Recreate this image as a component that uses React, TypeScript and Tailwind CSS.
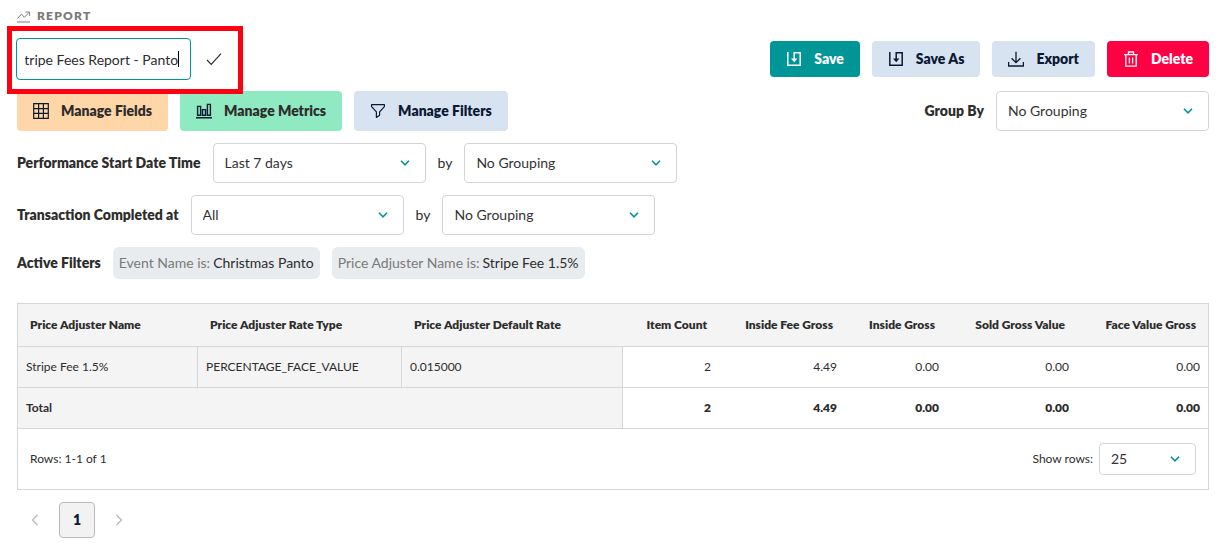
import { ReactNode, useEffect, useRef, useState } from "react";

type IconProps = { children: ReactNode; className?: string };

const Icon = ({ children, className = "h-4 w-4" }: IconProps) => (
  <svg
    viewBox="0 0 16 16"
    fill="none"
    stroke="currentColor"
    strokeWidth={1.2}
    aria-hidden="true"
    className={`shrink-0 ${className}`}
  >
    {children}
  </svg>
);

const TrendIcon = () => (
  <Icon className="h-[13px] w-[13px]">
    <path d="M0.5 10.5L5.5 5l3.5 4 6-6M10.5 2.5h5v5M0 14.8h16" />
  </Icon>
);

const GridIcon = () => (
  <Icon className="h-4 w-4 text-[#0b1a33]">
    <path d="M0.7 0.7h14.6v14.6H0.7zM5.6 0.7v14.6M10.4 0.7v14.6M0.7 5.6h14.6M0.7 10.4h14.6" />
  </Icon>
);

const BarsIcon = () => (
  <Icon className="h-4 w-4 text-[#0b1a33]">
    <path
      d="M1.6 3.4h3v8.8h-3zM6.5 6.6h3v5.6h-3zM11.4 1.4h3v10.8h-3zM0 14.8h16"
      strokeWidth={1.4}
    />
  </Icon>
);

const FilterIcon = () => (
  <Icon>
    <path d="M1.6 1.6h12.8v2L9.6 8.8v3.4l-3.2 2.2V8.8L1.6 3.6z" strokeLinejoin="round" />
  </Icon>
);

const SaveIcon = () => (
  <Icon>
    <path d="M1.8 1v13.2h12.4V1.8H8.2V9" strokeWidth={1.5} />
    <path d="M5 7.4h6.4L8.2 11.2z" fill="currentColor" stroke="none" />
  </Icon>
);

const ExportIcon = () => (
  <Icon>
    <path d="M8 0.8v10.6M3.6 7.2L8 11.6l4.4-4.4M0.6 11v4h14.8v-4" strokeWidth={1.3} />
  </Icon>
);

const TrashIcon = () => (
  <Icon>
    <path d="M1 3.6h14M5.5 3.4V1h5v2.4M2.8 3.8v11.4h10.4V3.8M6.4 6.4v6M9.6 6.4v6" strokeWidth={1.3} />
  </Icon>
);

type SelectProps = {
  id: string;
  options: string[];
  className?: string;
};

const Select = ({ id, options, className = "h-10 w-[213px]" }: SelectProps) => (
  <span className={`relative inline-flex ${className}`}>
    <select
      id={id}
      className="h-full w-full appearance-none rounded border border-[#d3d4d6] bg-white px-[11px] text-sm text-[#333] outline-none focus:border-[#009596]"
    >
      {options.map((option) => (
        <option key={option}>{option}</option>
      ))}
    </select>
    <svg
      viewBox="0 0 10 6"
      fill="none"
      stroke="#009596"
      strokeWidth={1.6}
      aria-hidden="true"
      className="pointer-events-none absolute inset-y-0 right-4 my-auto h-[6px] w-[10px]"
    >
      <path d="M1 0.8l4 4 4-4" />
    </svg>
  </span>
);

const actions = [
  { name: "Save", icon: <SaveIcon />, style: "bg-[#009596] text-white" },
  { name: "Save As", icon: <SaveIcon />, style: "bg-[#d8e3f1] text-[#0b1a33]" },
  { name: "Export", icon: <ExportIcon />, style: "bg-[#d8e3f1] text-[#0b1a33]" },
  { name: "Delete", icon: <TrashIcon />, style: "bg-[#ff0043] text-white" },
];

const managers = [
  { name: "Manage Fields", icon: <GridIcon />, style: "bg-[#ffd6a8] text-[#2d2d2d]" },
  { name: "Manage Metrics", icon: <BarsIcon />, style: "bg-[#8fe9c1] text-[#2d2d2d]" },
  { name: "Manage Filters", icon: <FilterIcon />, style: "bg-[#d8e3f1] text-[#0b1a33]" },
];

const dateFilters = [
  { id: "performance", label: "Performance Start Date Time", range: ["Last 7 days", "All"] },
  { id: "transaction", label: "Transaction Completed at", range: ["All", "Last 7 days"] },
];

const activeFilters = [
  { field: "Event Name is:", value: "Christmas Panto" },
  { field: "Price Adjuster Name is:", value: "Stripe Fee 1.5%" },
];

const dimensions = [
  { name: "Price Adjuster Name", value: "Stripe Fee 1.5%", width: "w-[180px]" },
  { name: "Price Adjuster Rate Type", value: "PERCENTAGE_FACE_VALUE", width: "w-[204px]" },
  { name: "Price Adjuster Default Rate", value: "0.015000", width: "w-[221px]" },
];

const metrics = [
  { name: "Item Count", value: "2", width: "w-[96px]" },
  { name: "Inside Fee Gross", value: "4.49", width: "w-[126px]" },
  { name: "Inside Gross", value: "0.00", width: "w-[102px]" },
  { name: "Sold Gross Value", value: "0.00", width: "w-[130px]" },
  { name: "Face Value Gross", value: "0.00", width: "w-[131px]" },
];

const groupings = ["No Grouping", "Day", "Week", "Month"];

const ReportTable = () => (
  <div className="mt-6 border border-[#d5d6d8] text-xs">
    <table className="w-full table-fixed border-separate border-spacing-0">
      <thead>
        <tr className="h-[43px] bg-[#f4f4f4]">
          {dimensions.map(({ name, width }) => (
            <th
              key={name}
              scope="col"
              className={`border-b border-[#d5d6d8] px-3 text-left font-extrabold ${width}`}
            >
              {name}
            </th>
          ))}
          {metrics.map(({ name, width }) => (
            <th
              key={name}
              scope="col"
              className={`border-b border-[#d5d6d8] px-3 text-right font-extrabold whitespace-nowrap ${width}`}
            >
              {name}
            </th>
          ))}
        </tr>
      </thead>
      <tbody>
        <tr className="h-[41px]">
          {dimensions.map(({ name, value }) => (
            <td key={name} className="border-r border-b border-[#d5d6d8] bg-[#f4f4f4] px-2">
              {value}
            </td>
          ))}
          {metrics.map(({ name, value }) => (
            <td key={name} className="border-b border-[#d5d6d8] px-2 text-right">
              {value}
            </td>
          ))}
        </tr>
      </tbody>
      <tfoot>
        <tr className="h-[41px] font-extrabold">
          <th
            scope="row"
            colSpan={dimensions.length}
            className="border-r border-b border-[#d5d6d8] bg-[#f4f4f4] px-2 text-left"
          >
            Total
          </th>
          {metrics.map(({ name, value }) => (
            <td key={name} className="border-b border-[#d5d6d8] px-2 text-right">
              {value}
            </td>
          ))}
        </tr>
      </tfoot>
    </table>
    <div className="flex h-[60px] items-center justify-between px-3">
      <p>Rows: 1-1 of 1</p>
      <div className="flex items-center gap-[6px]">
        <label htmlFor="page-size">Show rows:</label>
        <Select id="page-size" options={["25", "50", "100"]} className="h-8 w-[97px]" />
      </div>
    </div>
  </div>
);

const App = () => {
  const [title, setTitle] = useState("Stripe Fees Report - Panto");
  const titleRef = useRef<HTMLInputElement>(null);

  // start editing at the end of the title
  useEffect(() => {
    const input = titleRef.current;
    if (!input) return;
    input.focus();
    input.setSelectionRange(input.value.length, input.value.length);
    input.scrollLeft = input.scrollWidth;
  }, []);

  return (
    <main className="bg-white pt-2 pr-[15px] pb-[6px] pl-[17px] font-[Lato,sans-serif] text-sm text-[#2d2d2d]">
      <div className="flex h-4 items-center gap-[7px] text-[#7a7a7a]">
        <TrendIcon />
        <h1 className="text-xs font-extrabold tracking-widest uppercase">Report</h1>
      </div>

      <div className="mt-[14px] flex items-center justify-between">
        <form
          className="relative -ml-px flex items-center"
          onSubmit={(e) => e.preventDefault()}
        >
          <div className="relative flex">
            <input
              ref={titleRef}
              aria-label="Report name"
              value={title}
              onChange={(e) => setTitle(e.target.value)}
              className="h-[42px] w-[175px] rounded border border-[#009596] bg-white pr-3 pl-2 text-sm caret-transparent outline-none"
            />
            <span className="absolute inset-y-0 right-3 my-auto h-4 w-px bg-black" />
          </div>
          <button type="submit" aria-label="Confirm name" className="px-[15px] py-3">
            <Icon>
              <path d="M1 9l4.2 4.4L15 2.6" />
            </Icon>
          </button>
          <span className="pointer-events-none absolute -top-3 -right-[6px] -bottom-[14px] -left-[9px] border-5 border-[#ff0012]" />
        </form>
        <div className="flex gap-3">
          {actions.map(({ name, icon, style }) => (
            <button
              key={name}
              type="button"
              className={`flex h-9 items-center gap-3 rounded px-4 font-extrabold ${style}`}
            >
              {icon}
              {name}
            </button>
          ))}
        </div>
      </div>

      <div className="mt-[11px] flex items-center justify-between">
        <div className="flex gap-3">
          {managers.map(({ name, icon, style }) => (
            <button
              key={name}
              type="button"
              className={`flex h-10 items-center gap-3 rounded px-4 font-extrabold ${style}`}
            >
              {icon}
              {name}
            </button>
          ))}
        </div>
        <div className="flex items-center gap-3">
          <label htmlFor="group-by" className="font-extrabold">
            Group By
          </label>
          <Select id="group-by" options={groupings} />
        </div>
      </div>

      {dateFilters.map(({ id, label, range }) => (
        <div key={id} className="mt-3 flex items-center gap-3">
          <label htmlFor={id} className="font-extrabold">
            {label}
          </label>
          <Select id={id} options={range} />
          <label htmlFor={`${id}-grouping`}>by</label>
          <Select id={`${id}-grouping`} options={groupings} />
        </div>
      ))}

      <div className="mt-3 flex items-center gap-3">
        <h2 className="font-extrabold">Active Filters</h2>
        {activeFilters.map(({ field, value }) => (
          <span
            key={field}
            className="flex h-8 items-center gap-[3px] rounded-md bg-[#e8ecef] px-[6px]"
          >
            <span className="text-[#7a7a7a]">{field}</span>
            {value}
          </span>
        ))}
      </div>

      <ReportTable />

      <nav aria-label="Pagination" className="mt-3 flex items-center gap-[6px]">
        <button type="button" aria-label="Previous page" className="flex h-9 w-9 items-center justify-center text-[#b5b5b5]">
          <Icon>
            <path d="M10.5 3l-5 5 5 5" />
          </Icon>
        </button>
        <button
          type="button"
          aria-current="page"
          className="h-9 w-9 rounded border border-[#b9babc] bg-[#f2f2f2] font-extrabold text-[#0b1a33]"
        >
          1
        </button>
        <button type="button" aria-label="Next page" className="flex h-9 w-9 items-center justify-center text-[#b5b5b5]">
          <Icon>
            <path d="M5.5 3l5 5-5 5" />
          </Icon>
        </button>
      </nav>
    </main>
  );
};

export default App;
